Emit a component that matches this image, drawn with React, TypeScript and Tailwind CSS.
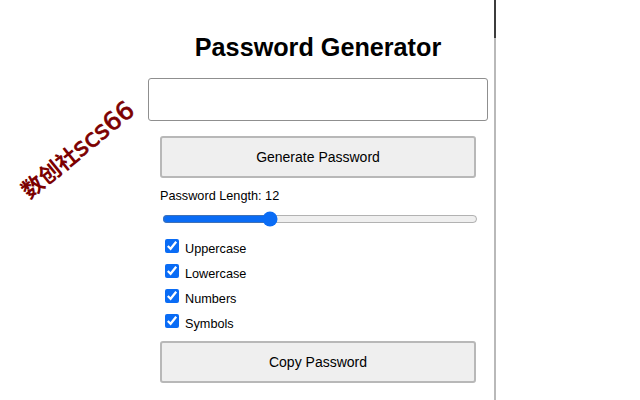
import { useState } from 'react';

const options = ['Uppercase', 'Lowercase', 'Numbers', 'Symbols'];

export default function App() {
  const [length, setLength] = useState(12);

  return (
    <div className="relative h-[400px] w-[640px] overflow-hidden bg-white font-['Liberation_Sans',Arial,sans-serif] text-black">
      {/* watermark */}
      <div className="absolute left-[2px] top-[132px] w-[152px] -rotate-[39deg] whitespace-nowrap text-center leading-[32px] text-[#7c0000]">
        <span className="font-['Noto_Sans_CJK_SC',sans-serif] text-[22px] font-bold">数创社</span>
        <span className="font-['DejaVu_Sans',sans-serif] text-[25px] font-normal [-webkit-text-stroke:0.7px_#7c0000]">scs66</span>
      </div>

      {/* popup edge */}
      <div className="absolute left-[494px] top-0 h-[38px] w-[2px] bg-[#3c3c3c]" />

      <div className="h-full w-[496px] border-r-2 border-[#b9b9b9] pl-[148px] pr-[6px] pt-[32px]">
        <h1 className="text-center text-[25.2px] leading-[30px] font-bold">Password Generator</h1>

        <input
          type="text"
          readOnly
          className="mt-[16px] block h-[43px] w-[340px] rounded-[3px] border border-[#8f8f8f] bg-white"
        />

        <div className="mt-[15px] ml-[12px] w-[316px]">
          <button
            type="button"
            className="block h-[42px] w-full rounded-[3px] border-2 border-[#b8b8b8] bg-[#efefef] text-[14px]"
          >
            Generate Password
          </button>

          <div className="mt-[11px] text-[12.7px] leading-[15px]">Password Length: {length}</div>

          <input
            type="range"
            min={4}
            max={28}
            value={length}
            onChange={(e) => setLength(Number(e.target.value))}
            className="mt-[7px] ml-[2px] block h-[16px] w-[316px] accent-[#0a6cf5]"
          />

          <div className="mt-[12px] flex flex-col gap-[7px] pl-[5px]">
            {options.map((name) => (
              <label key={name} className="flex h-[18px] items-start gap-[6px] text-[12.7px] leading-[20px]">
                <input type="checkbox" defaultChecked className="m-0 h-[14px] w-[14px] accent-[#0a6cf5]" />
                {name}
              </label>
            ))}
          </div>

          <button
            type="button"
            className="mt-[9px] block h-[42px] w-full rounded-[3px] border-2 border-[#b8b8b8] bg-[#efefef] text-[14px]"
          >
            Copy Password
          </button>
        </div>
      </div>
    </div>
  );
}
